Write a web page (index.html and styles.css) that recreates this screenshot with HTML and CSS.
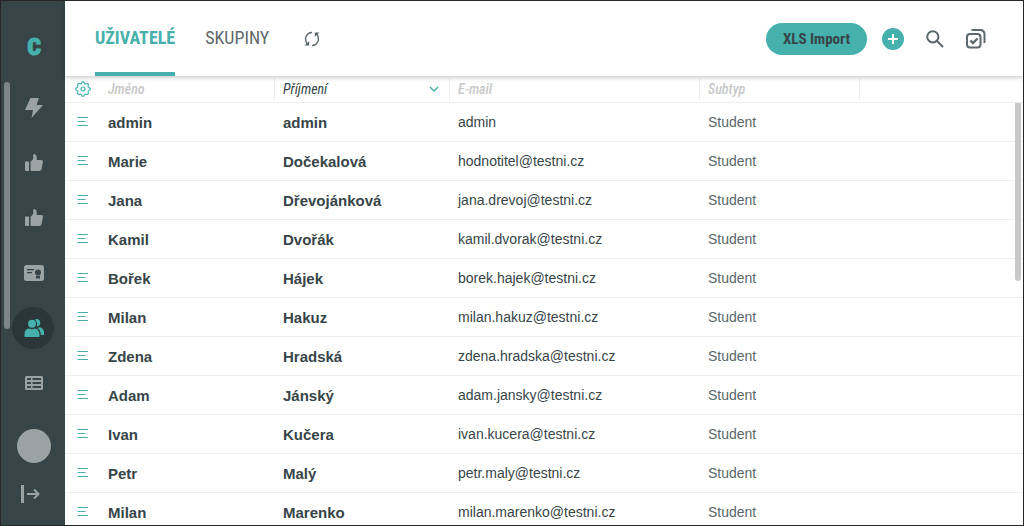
FILE: index.html
```html
<!DOCTYPE html>
<html lang="cs">

<head>
    <meta charset="UTF-8">
    <meta name="viewport" content="width=device-width, initial-scale=1.0">
    <title>Uživatelé</title>
    <link rel="stylesheet" href="styles.css">
</head>

<body>
    <!-- shared icons -->
    <svg class="sprite" aria-hidden="true">
        <symbol id="lines" viewBox="0 0 12 12">
            <path d="M.5 1.500h10.500M.5 5.500h8M.5 9.500h10.500" />
        </symbol>
        <symbol id="thumb" viewBox="0 0 18 18">
            <path d="M0 7.500h4V17H1Q0 17 0 16zM5.500 16V8l2.700-3V1.200Q8.300 0 9.500 0q2 .3 2.200 3v3H16.500q1.500.2 1.500 1.800l-1.500 7.500Q16 17 14.500 17h-8q-1 0-1-1z" />
        </symbol>
    </svg>

    <div class="app">
        <aside class="sidebar">
            <a class="logo" href="#">C</a>
            <nav class="menu">
                <a class="menu_item" href="#" aria-label="Aktivity">
                    <svg width="18" height="20" viewBox="0 0 18 20"><path d="M5.500 0H14l-2.500 7H18L6.500 20l1.500-8H0z" /></svg>
                </a>
                <a class="menu_item" href="#" aria-label="Hodnocení"><svg width="18" height="18"><use href="#thumb" /></svg></a>
                <a class="menu_item" href="#" aria-label="Moje hodnocení"><svg width="18" height="18"><use href="#thumb" /></svg></a>
                <a class="menu_item" href="#" aria-label="Certifikáty">
                    <svg width="20" height="16" viewBox="0 0 20 16">
                        <rect width="20" height="16" rx="2.500" />
                        <path class="cut" d="M3 4h7v1.200H3zM3 7h5v1.200H3z" />
                        <circle class="cut" cx="14" cy="7.500" r="3" />
                        <path class="cut" d="M12 10.800h4V14l-2-1-2 1z" />
                    </svg>
                </a>
                <a class="menu_item active" href="#" aria-label="Uživatelé">
                    <svg width="20" height="18" viewBox="0 0 20 18">
                        <circle cx="8" cy="4.800" r="4" />
                        <path d="M.5 18v-2.500Q.5 10 5 9.500q3 1.500 6 0 4 .5 4.500 6V18zM11 .5Q12.300-.2 14 .2q2.500.9 2.300 4-.4 3-3.600 3.300 1.500-3.500-1.700-7zM13.300 9l2.700-.7q3.500 1 4 4.500V16h-3.300v-1.500q-.2-3.500-3.400-5.500z" />
                    </svg>
                </a>
                <a class="menu_item" href="#" aria-label="Tabulky">
                    <svg width="18" height="14" viewBox="0 0 18 14">
                        <rect width="18" height="14" rx="1.500" />
                        <path class="cut" d="M2 2h4v2H2zM7.500 2H16v2H7.500zM2 6h4v2H2zM7.500 6H16v2H7.500zM2 10h4v2H2zM7.500 10H16v2H7.500z" />
                    </svg>
                </a>
            </nav>
            <a class="avatar" href="#" aria-label="Profil"></a>
            <button class="logout" aria-label="Odhlásit">
                <svg width="20" height="18" viewBox="0 0 20 18">
                    <path d="M0 0h3v18H0z" />
                    <path class="stroke" d="M6 9h11M13 4.500L17.500 9 13 13.500" />
                </svg>
            </button>
            <div class="scroll scroll_menu"></div>
        </aside>

        <main class="content">
            <header class="topbar">
                <nav class="tabs">
                    <a class="tab selected" href="#">UŽIVATELÉ</a>
                    <a class="tab" href="#">SKUPINY</a>
                </nav>
                <button class="icon_btn refresh" aria-label="Obnovit">
                    <svg width="16" height="16" viewBox="0 0 16 16">
                        <path d="M8 1.500Q4.500 1.200 2.300 5 .6 9 3 13M8 14.500q3.500.3 5.700-3.500 1.700-4-.7-8" />
                        <path class="arrow" d="M.5 14.500h4.700V10zM15.500 1.500h-4.700V6z" />
                    </svg>
                </button>
                <div class="actions">
                    <button class="import">XLS Import</button>
                    <button class="icon_btn" aria-label="Přidat">
                        <svg width="22" height="22" viewBox="0 0 22 22">
                            <circle class="add_bg" cx="11" cy="11" r="11" />
                            <path class="add_plus" d="M11 6v10M6 11h10" />
                        </svg>
                    </button>
                    <button class="icon_btn" aria-label="Hledat">
                        <svg class="bold" width="18" height="18" viewBox="0 0 18 18">
                            <circle cx="6.800" cy="6.800" r="5.600" />
                            <path d="M11 11l6 6" />
                        </svg>
                    </button>
                    <button class="icon_btn" aria-label="Vybrat vše">
                        <svg class="bold" width="20" height="20" viewBox="0 0 20 20">
                            <rect x="1" y="5" width="13.500" height="13.500" rx="3" />
                            <path d="M5.500 1H14q4.500 0 4.500 4.500V14" />
                            <path class="check" d="M4.500 11.500l2.500 2.500 4.500-4.500" />
                        </svg>
                    </button>
                </div>
            </header>

            <div class="list">
                <table class="users">
                    <colgroup>
                        <col class="col_menu">
                        <col class="col_name">
                        <col class="col_name">
                        <col class="col_mail">
                        <col class="col_type">
                        <col>
                    </colgroup>
                    <thead>
                        <tr>
                            <th>
                                <button class="icon_btn gear" aria-label="Nastavení sloupců">
                                    <svg width="16" height="16" viewBox="0 0 16 16">
                                        <path d="M6.300 2.500Q8-1.300 9.700 2.500q.5.600 1 .4 3.500-1.500 2.400 2.400-.2.700.4 1 3.800 1.700 0 3.400-.6.300-.4 1 1.100 3.900-2.400 2.400-.5-.2-1 .4Q8 17.300 6.300 13.500q-.5-.6-1-.4-3.500 1.500-2.400-2.400.2-.7-.4-1-3.800-1.700 0-3.400.6-.3.400-1-1.100-3.900 2.400-2.400.5.200 1-.4z" />
                                        <circle cx="8" cy="8" r="2" />
                                    </svg>
                                </button>
                            </th>
                            <th><span class="head">Jméno</span></th>
                            <th><span class="head sorted">Příjmení
                                <svg width="10" height="6" viewBox="0 0 10 6"><path d="M1 1l4 4 4-4" /></svg></span></th>
                            <th><span class="head">E-mail</span></th>
                            <th><span class="head">Subtyp</span></th>
                            <th></th>
                        </tr>
                    </thead>
                    <tbody>
                        <tr>
                            <td><button class="icon_btn row_menu" aria-label="Menu"><svg width="12" height="12"><use href="#lines" /></svg></button></td>
                            <td class="name">admin</td>
                            <td class="name">admin</td>
                            <td>admin</td>
                            <td class="type">Student</td>
                            <td></td>
                        </tr>
                        <tr>
                            <td><button class="icon_btn row_menu" aria-label="Menu"><svg width="12" height="12"><use href="#lines" /></svg></button></td>
                            <td class="name">Marie</td>
                            <td class="name">Dočekalová</td>
                            <td>hodnotitel@testni.cz</td>
                            <td class="type">Student</td>
                            <td></td>
                        </tr>
                        <tr>
                            <td><button class="icon_btn row_menu" aria-label="Menu"><svg width="12" height="12"><use href="#lines" /></svg></button></td>
                            <td class="name">Jana</td>
                            <td class="name">Dřevojánková</td>
                            <td>jana.drevoj@testni.cz</td>
                            <td class="type">Student</td>
                            <td></td>
                        </tr>
                        <tr>
                            <td><button class="icon_btn row_menu" aria-label="Menu"><svg width="12" height="12"><use href="#lines" /></svg></button></td>
                            <td class="name">Kamil</td>
                            <td class="name">Dvořák</td>
                            <td>kamil.dvorak@testni.cz</td>
                            <td class="type">Student</td>
                            <td></td>
                        </tr>
                        <tr>
                            <td><button class="icon_btn row_menu" aria-label="Menu"><svg width="12" height="12"><use href="#lines" /></svg></button></td>
                            <td class="name">Bořek</td>
                            <td class="name">Hájek</td>
                            <td>borek.hajek@testni.cz</td>
                            <td class="type">Student</td>
                            <td></td>
                        </tr>
                        <tr>
                            <td><button class="icon_btn row_menu" aria-label="Menu"><svg width="12" height="12"><use href="#lines" /></svg></button></td>
                            <td class="name">Milan</td>
                            <td class="name">Hakuz</td>
                            <td>milan.hakuz@testni.cz</td>
                            <td class="type">Student</td>
                            <td></td>
                        </tr>
                        <tr>
                            <td><button class="icon_btn row_menu" aria-label="Menu"><svg width="12" height="12"><use href="#lines" /></svg></button></td>
                            <td class="name">Zdena</td>
                            <td class="name">Hradská</td>
                            <td>zdena.hradska@testni.cz</td>
                            <td class="type">Student</td>
                            <td></td>
                        </tr>
                        <tr>
                            <td><button class="icon_btn row_menu" aria-label="Menu"><svg width="12" height="12"><use href="#lines" /></svg></button></td>
                            <td class="name">Adam</td>
                            <td class="name">Jánský</td>
                            <td>adam.jansky@testni.cz</td>
                            <td class="type">Student</td>
                            <td></td>
                        </tr>
                        <tr>
                            <td><button class="icon_btn row_menu" aria-label="Menu"><svg width="12" height="12"><use href="#lines" /></svg></button></td>
                            <td class="name">Ivan</td>
                            <td class="name">Kučera</td>
                            <td>ivan.kucera@testni.cz</td>
                            <td class="type">Student</td>
                            <td></td>
                        </tr>
                        <tr>
                            <td><button class="icon_btn row_menu" aria-label="Menu"><svg width="12" height="12"><use href="#lines" /></svg></button></td>
                            <td class="name">Petr</td>
                            <td class="name">Malý</td>
                            <td>petr.maly@testni.cz</td>
                            <td class="type">Student</td>
                            <td></td>
                        </tr>
                        <tr>
                            <td><button class="icon_btn row_menu" aria-label="Menu"><svg width="12" height="12"><use href="#lines" /></svg></button></td>
                            <td class="name">Milan</td>
                            <td class="name">Marenko</td>
                            <td>milan.marenko@testni.cz</td>
                            <td class="type">Student</td>
                            <td></td>
                        </tr>
                    </tbody>
                </table>
                <div class="scroll scroll_list"></div>
            </div>
        </main>
    </div>
</body>

</html>
```
FILE: styles.css
```css
* {
    box-sizing: border-box;

    --main: #45b0ac;
    --dark: #374548;
    --gray: #9aa2a3;
    --text: #374548;
    --line: #eeeeee;
    --condensed: "Roboto Condensed", "Liberation Sans Narrow", Roboto, sans-serif;
}

body {
    margin: 0;
    font-family: "Liberation Sans", Arial, sans-serif;
    font-size: 14px;
    color: var(--text);
    background-color: #fff;
}

button {
    padding: 0;
    border: 0;
    background: none;
    cursor: pointer;
}

a {
    text-decoration: none;
}

svg {
    display: block;
}

.sprite {
    display: none;
}

.app {
    display: flex;
    height: 100vh;
    border: 1px solid #262626;
    overflow: hidden;
}

/* sidebar */
.sidebar {
    position: relative;
    display: flex;
    flex-direction: column;
    align-items: center;
    flex: none;
    width: 64px;
    background-color: var(--dark);
}

.logo {
    height: 86px;
    padding-left: 2px;
    line-height: 92px;
    font-family: var(--condensed);
    font-size: 24px;
    font-weight: 900;
    color: var(--main);
    -webkit-text-stroke: 1px var(--main);
}

.menu {
    display: flex;
    flex-direction: column;
    gap: 13px;
}

.menu_item {
    display: flex;
    align-items: center;
    justify-content: center;
    width: 42px;
    height: 42px;
    padding-left: 2px;
    border-radius: 50%;
    fill: var(--gray);
}

.menu_item .cut {
    fill: var(--dark);
}

.menu_item.active {
    background-color: #2b363a;
    fill: var(--main);
}

.avatar {
    width: 34px;
    height: 34px;
    margin: 25px 0 22px 2px;
    border-radius: 50%;
    background-color: var(--gray);
}

.logout {
    padding-right: 4px;
    fill: var(--gray);
}

.logout .stroke {
    fill: none;
    stroke: var(--gray);
    stroke-width: 2;
}

.scroll {
    position: absolute;
    width: 6px;
    border-radius: 3px;
}

.scroll_menu {
    top: 81px;
    left: 3px;
    height: 247px;
    background-color: #7f8688;
}

.scroll_list {
    top: 27px;
    right: 2px;
    height: 178px;
    border-radius: 0 0 3px 3px;
    background-color: #c8c8c8;
}

/* top bar */
.content {
    display: flex;
    flex-direction: column;
    flex: 1;
    min-width: 0;
}

.topbar {
    position: relative;
    z-index: 1;
    display: flex;
    align-items: center;
    flex: none;
    height: 75px;
    padding: 0 37px 0 30px;
    background-color: #fff;
    box-shadow: 0 1px 5px rgba(0, 0, 0, 0.25);
}

.tabs {
    display: flex;
    gap: 30px;
    height: 100%;
}

.tab {
    height: 100%;
    line-height: 74px;
    font-family: var(--condensed);
    font-size: 18px;
    color: #5f6a6d;
}

.tab.selected {
    font-weight: bold;
    color: var(--main);
    border-bottom: 4px solid var(--main);
}

.icon_btn svg {
    fill: none;
    stroke: #5a676b;
    stroke-width: 1.4;
}

.icon_btn svg.bold {
    stroke-width: 2;
}

.icon_btn .check {
    stroke-width: 2.4;
}

.icon_btn .arrow {
    fill: #5a676b;
    stroke: none;
}

.refresh {
    margin-left: 35px;
}

.actions {
    display: flex;
    align-items: center;
    gap: 22px;
    margin-left: auto;
}

.import {
    height: 32px;
    margin-right: -7px;
    padding: 0 17px;
    border-radius: 16px;
    font-family: var(--condensed);
    font-size: 15px;
    font-weight: bold;
    color: var(--text);
    background-color: var(--main);
}

.icon_btn .add_bg {
    fill: var(--main);
    stroke: none;
}

.icon_btn .add_plus {
    stroke: #fff;
    stroke-width: 2;
}

/* users */
.list {
    position: relative;
    flex: 1;
    min-height: 0;
}

.users {
    width: 100%;
    table-layout: fixed;
    border-spacing: 0;
}

.col_menu {
    width: 35px;
}

.col_name {
    width: 175px;
}

.col_mail {
    width: 250px;
}

.col_type {
    width: 160px;
}

th {
    height: 27px;
    padding: 0;
    text-align: left;
    border-bottom: 1px solid var(--line);
}

.head {
    display: flex;
    align-items: center;
    justify-content: space-between;
    height: 22px;
    padding: 0 10px 0 8px;
    border-right: 1px solid var(--line);
    font-family: var(--condensed);
    font-size: 14px;
    font-style: italic;
    font-weight: 500;
    color: #c8c8c8;
}

.head.sorted {
    font-weight: normal;
    color: var(--text);
}

.head svg {
    fill: none;
    stroke: var(--main);
    stroke-width: 1.5;
}

.gear,
.row_menu {
    display: block;
    margin: 0 auto;
}

.gear svg,
.row_menu svg {
    stroke: var(--main);
    stroke-width: 1.2;
}

td {
    height: 39px;
    padding: 0 8px;
    border-bottom: 1px solid var(--line);
}

td:first-child {
    padding: 0;
}

.name {
    font-size: 15px;
    font-weight: bold;
}

.type {
    color: #5a676b;
}
```
